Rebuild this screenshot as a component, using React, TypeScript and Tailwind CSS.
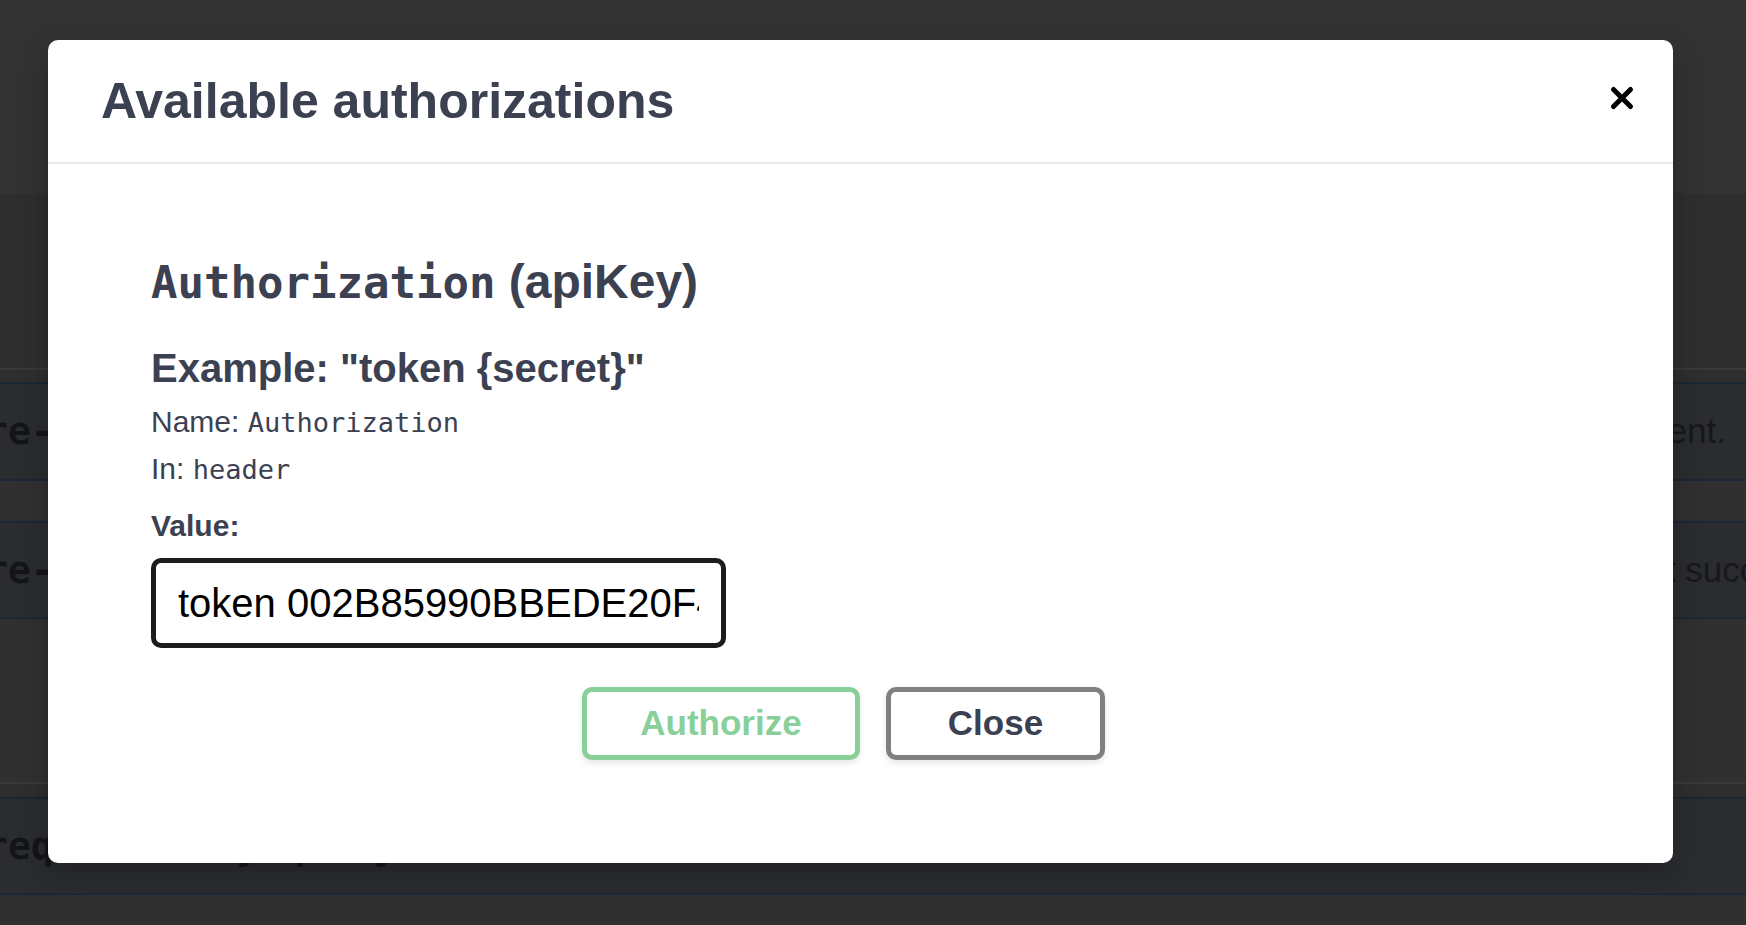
import React from "react";

function BgRow({
  left,
  right,
  rightClass,
  height,
}: {
  left: string;
  right?: string;
  rightClass?: string;
  height: string;
}) {
  return (
    <div
      className={`flex items-center overflow-hidden border-y-2 border-[#1c2735] bg-[#2b2c2f] ${height}`}
    >
      <span className="-ml-[15px] shrink-0 whitespace-nowrap font-['DejaVu_Sans_Mono',monospace] text-[38px] font-bold text-[#141518]">
        {left}
      </span>
      <div className="flex-1" />
      {right ? (
        <span
          className={`shrink-0 whitespace-nowrap text-[35px] text-[#17181b] ${rightClass ?? ""}`}
        >
          {right}
        </span>
      ) : null}
    </div>
  );
}

function CloseIcon() {
  return (
    <svg width="26" height="26" viewBox="0 0 26 26" className="mb-[7px] shrink-0">
      <path
        d="M4.5 4.5 L21.5 21.5 M21.5 4.5 L4.5 21.5"
        stroke="#000"
        strokeWidth="5"
        strokeLinecap="round"
        fill="none"
      />
    </svg>
  );
}

export default function App() {
  return (
    <div className="relative h-[925px] w-[1746px] overflow-hidden bg-[#303030] font-['Liberation_Sans',Arial,sans-serif]">
      {/* page behind the backdrop */}
      <div className="h-[193px] bg-[#333333]" />
      <div className="h-[175px] bg-[#2e2e2e]" />
      <div className="h-[2px] bg-[#393939]" />
      <div className="h-[12px] bg-[#2e2e2e]" />
      <BgRow
        height="h-[99px]"
        left="re-plans/{id}"
        right="Updates the existing document."
        rightClass="pr-[20px]"
      />
      <div className="h-[40px] bg-[#303030]" />
      <BgRow
        height="h-[98px]"
        left="re-plans/{id}/status"
        right="Returns the plan if it successfully"
        rightClass="-mr-[128px]"
      />
      <div className="h-[163px] bg-[#303030]" />
      <div className="h-[2px] bg-[#393939]" />
      <div className="h-[13px] bg-[#2e2e2e]" />
      <BgRow height="h-[98px]" left="request-body/query" />
      <div className="flex-1 bg-[#333333]" />

      {/* modal */}
      <div className="absolute left-[48px] top-[40px] w-[1625px] rounded-[10px] bg-white shadow-[0_10px_30px_rgba(0,0,0,0.25)]">
        <div className="flex h-[124px] items-center justify-between border-b-2 border-[#e8e8e8] pl-[53px] pr-[38px]">
          <h3 className="m-0 text-[50px] font-bold leading-none text-[#3b4151]">
            Available authorizations
          </h3>
          <CloseIcon />
        </div>

        <div className="pb-[103px] pl-[103px] pr-[102px] pt-[91px] text-[#3b4151]">
          <h4 className="m-0 text-[48px] font-bold leading-[54px]">
            <code className="font-['DejaVu_Sans_Mono',monospace] text-[44px] font-bold">
              Authorization
            </code>{" "}
            (apiKey)
          </h4>
          <h6 className="m-0 mt-[34px] text-[40px] font-bold leading-[48px]">
            Example: "token {"{secret}"}"
          </h6>
          <p className="m-0 mt-[10px] text-[30px] leading-[40px]">
            Name:{" "}
            <code className="font-['DejaVu_Sans_Mono',monospace] text-[27px]">
              Authorization
            </code>
          </p>
          <p className="m-0 mt-[6px] text-[30px] leading-[40px]">
            In:{" "}
            <code className="font-['DejaVu_Sans_Mono',monospace] text-[27px]">
              header
            </code>
          </p>
          <label className="mt-[16px] block text-[30px] font-bold leading-[40px]">
            Value:
          </label>
          <input
            readOnly
            value="token 002B85990BBEDE20F4A6C1D93E7B"
            className="mt-[12px] block h-[90px] w-[575px] rounded-[10px] border-[5px] border-[#1c1c1c] bg-white px-[22px] font-['Liberation_Sans',Arial,sans-serif] text-[40px] text-black outline-none"
          />
          <div className="mt-[39px] flex justify-center">
            <button className="h-[73px] w-[278px] rounded-[10px] border-[5px] border-[#88cf99] bg-white text-[35px] font-bold text-[#88cf99] shadow-[0_3px_6px_rgba(0,0,0,0.1)]">
              Authorize
            </button>
            <button className="ml-[26px] mr-[35px] h-[73px] w-[219px] rounded-[10px] border-[5px] border-[#808080] bg-white text-[35px] font-bold text-[#3b4151] shadow-[0_3px_6px_rgba(0,0,0,0.1)]">
              Close
            </button>
          </div>
        </div>
      </div>
    </div>
  );
}
